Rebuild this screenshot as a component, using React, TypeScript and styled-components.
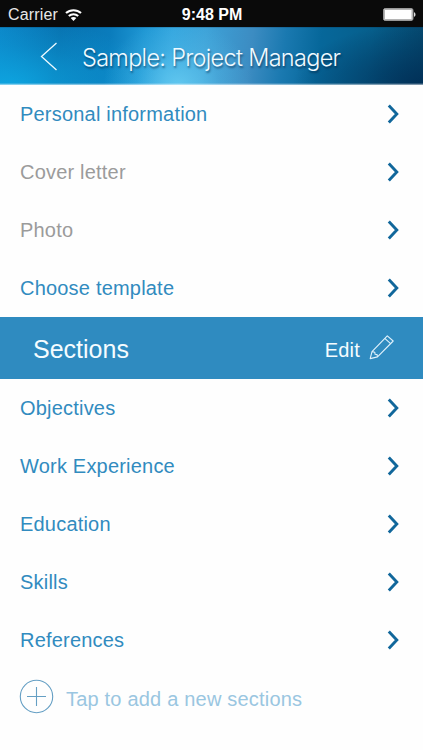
import React from "react";
import styled, { createGlobalStyle } from "styled-components";

const GlobalStyle = createGlobalStyle`
  * { box-sizing: border-box; }
  body { margin: 0; background: #fefefe; }
  button { font: inherit; color: inherit; border: 0; padding: 0; background: none; }
`;

const Screen = styled.main`
  width: 423px;
  height: 750px;
  overflow: hidden;
  display: flex;
  flex-direction: column;
  background: #fefefe;
  font-family: "Liberation Sans", Arial, sans-serif;
`;

const StatusBar = styled.div`
  height: 27px;
  flex: none;
  display: grid;
  grid-template-columns: 1fr auto 1fr;
  align-items: center;
  padding: 1px 7px 0 8px;
  background: #0a0a0a;
  color: #fff;
  font-size: 16px;
  line-height: 26px;
`;

const Carrier = styled.div`
  display: flex;
  align-items: center;
  gap: 7px;
  padding-top: 1px;
  letter-spacing: 0.17px;
  color: #e8e8e8;
`;

const Clock = styled.div`
  font-size: 16px;
  font-weight: 700;
  letter-spacing: 0;
`;

const BatterySlot = styled.div`
  display: flex;
  justify-content: flex-end;
`;

const NavBar = styled.header`
  height: 58px;
  flex: none;
  display: flex;
  align-items: center;
  padding: 0 0 0 40px;
  background:
    linear-gradient(to bottom, rgba(0, 30, 60, 0.35) 0, transparent 1px, transparent 56px, rgba(255, 255, 255, 0.65) 58px),
    radial-gradient(ellipse 75px 66px at 178px 58px, rgba(110, 210, 245, 0.75), rgba(110, 210, 245, 0.2) 55%, rgba(110, 210, 245, 0) 100%),
    radial-gradient(ellipse 150px 66px at 10px 58px, rgba(14, 172, 230, 0.8), rgba(14, 172, 230, 0.25) 60%, rgba(14, 172, 230, 0) 100%),
    radial-gradient(ellipse 130px 62px at 423px 58px, rgba(0, 42, 82, 0.8), rgba(0, 42, 82, 0) 100%),
    linear-gradient(97deg, #0c86c8 0, #0872b0 60px, #0a7cbc 110px, #1f97d4 145px, #33a5de 172px, #3da2d8 205px, #3c8cc2 252px, #1a79b0 285px, #06679a 320px, #065f8c 370px, #05496f 423px);
`;

const Title = styled.h1`
  margin: 3px 0 0 24px;
  font-family: Inter, "Liberation Sans", sans-serif;
  font-weight: 300;
  font-size: 23.5px;
  line-height: 30px;
  letter-spacing: -0.7px;
  white-space: nowrap;
  color: #f0faff;
  text-shadow: 1px 2px 2px rgba(0, 30, 60, 0.5);
`;

const List = styled.ul`
  list-style: none;
  margin: 0;
  padding: 0;
  flex: none;
`;

const Row = styled.li<{ $muted?: boolean }>`
  height: 58px;
  display: flex;
  align-items: center;
  justify-content: space-between;
  padding: 0 23px 0 20px;
  font-size: 20px;
  letter-spacing: 0.2px;
  color: ${(p) => (p.$muted ? "#9b9b9b" : "#318bbf")};
`;

const SectionBar = styled.div`
  height: 62px;
  flex: none;
  display: flex;
  align-items: center;
  justify-content: space-between;
  padding: 0 28px 0 33px;
  background: #2f8bc0;
  color: #f5fcff;
`;

const SectionTitle = styled.h2`
  margin: 1px 0 0;
  font-weight: 400;
  font-size: 25px;
  line-height: 30px;
`;

const EditButton = styled.button`
  display: flex;
  align-items: center;
  gap: 9px;
  font-size: 20px;
`;

const EditLabel = styled.span`
  padding-top: 4px;
  letter-spacing: 0.2px;
`;

const AddRow = styled.button`
  height: 56px;
  flex: none;
  display: flex;
  align-items: center;
  gap: 12px;
  padding: 0 19px 2px;
  font-size: 20px;
  color: #9ac6e1;
`;

const AddLabel = styled.span`
  padding-top: 6px;
  letter-spacing: 0.2px;
`;

const Wifi = () => (
  <svg width="17" height="13" viewBox="0 0 17 13" fill="none" stroke="#fff" strokeWidth="2.1">
    <path d="M1 4.1C5.2.2 11.8.2 16 4.1" />
    <path d="M3.8 7.1c2.7-2.5 6.7-2.5 9.4 0" />
    <path d="M8.5 11.9 5.7 9.1c1.6-1.4 4-1.4 5.6 0Z" fill="#fff" stroke="none" />
  </svg>
);

const Battery = () => (
  <svg width="33" height="13" viewBox="0 0 33 13">
    <rect x="0.5" y="0.5" width="29.5" height="12" rx="1.8" fill="#fff" stroke="#999" />
    <rect x="1.5" y="1.5" width="27.5" height="10" rx="0.8" fill="#fff" stroke="#444" strokeWidth="0.4" />
    <path d="M31 4.2c2 .6 2 4 0 4.6Z" fill="#ddd" />
  </svg>
);

const BackButton = styled.button`
  display: flex;
  padding-top: 1px;
`;

const Back = () => (
  <svg width="18" height="29" viewBox="0 0 18 29" fill="none" stroke="#eefaff" strokeWidth="1.3">
    <path d="M16.5 1 1.5 14.5l15 13.5" />
  </svg>
);

const Chevron = () => (
  <svg width="13" height="20" viewBox="0 0 13 20" fill="none" stroke="#11679b" strokeWidth="2.9">
    <path d="M1.8 1.6 9.8 10l-8 8.4" />
  </svg>
);

const Pencil = () => (
  <svg width="26" height="26" viewBox="0 0 26 26" fill="none" stroke="#e0f2fc" strokeWidth="1.1" strokeLinejoin="round">
    <path d="M1.2 23.6 3 16.6 18.3.8 24.2 6 8.5 21.9Z" />
    <path d="m3 16.6 2.8.7.3 2 2 .3.4 2.3M15.8 3.4 21.6 8.7" />
  </svg>
);

const Plus = () => (
  <svg width="35" height="35" viewBox="0 0 35 35" fill="none" stroke="#659fc4" strokeWidth="1.1">
    <circle cx="17.5" cy="17.5" r="16.2" />
    <path d="M8 17.5h19M17.5 8v19" />
  </svg>
);

const details = [
  { label: "Personal information" },
  { label: "Cover letter", muted: true },
  { label: "Photo", muted: true },
  { label: "Choose template" },
];

const sections = [
  { label: "Objectives" },
  { label: "Work Experience" },
  { label: "Education" },
  { label: "Skills" },
  { label: "References" },
];

const Entries = ({ items }: { items: { label: string; muted?: boolean }[] }) => (
  <List>
    {items.map((item) => (
      <Row key={item.label} $muted={item.muted}>
        <span>{item.label}</span>
        <Chevron />
      </Row>
    ))}
  </List>
);

export default function App() {
  return (
    <>
      <GlobalStyle />
      <Screen>
        <StatusBar>
          <Carrier>
            <span>Carrier</span>
            <Wifi />
          </Carrier>
          <Clock>9:48 PM</Clock>
          <BatterySlot>
            <Battery />
          </BatterySlot>
        </StatusBar>
        <NavBar>
          <BackButton aria-label="Back">
            <Back />
          </BackButton>
          <Title>Sample: Project Manager</Title>
        </NavBar>
        <Entries items={details} />
        <SectionBar>
          <SectionTitle>Sections</SectionTitle>
          <EditButton>
            <EditLabel>Edit</EditLabel>
            <Pencil />
          </EditButton>
        </SectionBar>
        <Entries items={sections} />
        <AddRow>
          <Plus />
          <AddLabel>Tap to add a new sections</AddLabel>
        </AddRow>
      </Screen>
    </>
  );
}
